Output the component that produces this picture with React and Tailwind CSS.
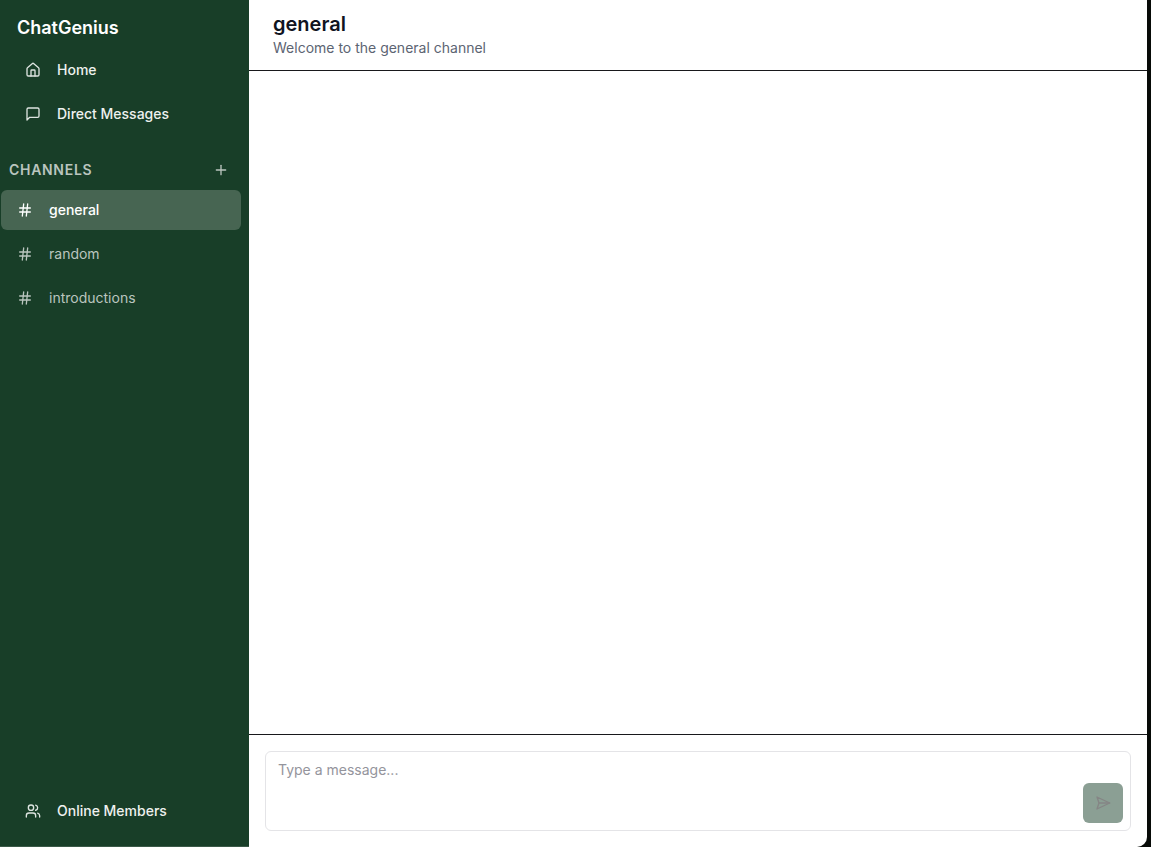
import { Hash, House, Plus, Users } from "lucide-react";

const channels = ["general", "random", "introductions"];

function MessageIcon({ className }) {
  return (
    <svg
      viewBox="0 0 24 24"
      className={`size-4 ${className}`}
      fill="none"
      stroke="currentColor"
      strokeWidth="2"
      strokeLinecap="round"
      strokeLinejoin="round"
      aria-hidden="true"
    >
      <path d="M21 15a2 2 0 0 1-2 2H7l-4 4V5a2 2 0 0 1 2-2h14a2 2 0 0 1 2 2z" />
    </svg>
  );
}

function SendIcon() {
  return (
    <svg
      viewBox="0 0 24 24"
      className="size-4"
      fill="none"
      stroke="currentColor"
      strokeWidth="2"
      strokeLinecap="round"
      strokeLinejoin="round"
      aria-hidden="true"
    >
      <path d="m3 3 3 9-3 9 19-9Z" />
      <path d="M6 12h16" />
    </svg>
  );
}

function NavButton({ icon: Icon, children }) {
  return (
    <button
      type="button"
      className="flex h-10 w-full items-center gap-4 rounded-md px-4 text-left text-sm font-medium text-[#eef1ef]"
    >
      <Icon size={16} className="shrink-0 text-[#dde4e0]" />
      {children}
    </button>
  );
}

function ChannelButton({ name, active }) {
  return (
    <button
      type="button"
      aria-current={active ? "page" : undefined}
      className={
        active
          ? "flex h-10 w-full items-center gap-4 rounded-md bg-[#476552] px-4 text-left text-sm font-medium text-white"
          : "flex h-10 w-full items-center gap-4 rounded-md px-4 text-left text-sm text-[#bac5bf]"
      }
    >
      <Hash size={16} strokeWidth={2} className="shrink-0" />
      {name}
    </button>
  );
}

function Sidebar() {
  return (
    <aside className="flex w-[249px] shrink-0 flex-col bg-[#183e28] pr-2 pl-px shadow-[inset_0_-1px_0_#3b5948]">
      <h1 className="px-4 pt-3.5 text-lg leading-7 font-semibold text-white">ChatGenius</h1>
      <nav aria-label="Main" className="mt-2 flex flex-col gap-1 pl-2">
        <NavButton icon={House}>Home</NavButton>
        <NavButton icon={MessageIcon}>Direct Messages</NavButton>
      </nav>
      <section className="mt-6">
        <div className="flex h-6 items-center justify-between pr-3 pl-2 text-[#bac5bf]">
          <h2 className="text-sm font-semibold tracking-wider uppercase">Channels</h2>
          <button type="button" aria-label="Add channel" className="flex size-4 items-center justify-center">
            <Plus size={16} strokeWidth={2} />
          </button>
        </div>
        <nav aria-label="Channels" className="mt-2 flex flex-col gap-1">
          {channels.map((name) => (
            <ChannelButton key={name} name={name} active={name === "general"} />
          ))}
        </nav>
      </section>
      <div className="mt-auto pb-4 pl-2">
        <NavButton icon={Users}>Online Members</NavButton>
      </div>
    </aside>
  );
}

export default function App() {
  return (
    <div className="h-screen bg-[#080b08] pr-1 font-['Inter',sans-serif]">
      <div className="flex h-full overflow-hidden rounded-br-[10px] bg-white">
        <Sidebar />
        <main className="flex min-w-0 flex-1 flex-col">
          <header className="border-b border-[#18181b] px-6 pt-2.5 pb-3">
            <h2 className="text-xl leading-7 font-semibold text-[#10141f]">general</h2>
            <p className="text-sm text-[#5c6472]">Welcome to the general channel</p>
          </header>
          <div className="flex-1" />
          <form className="border-t border-[#18181b] p-4" onSubmit={(e) => e.preventDefault()}>
            <div className="relative">
              <textarea
                aria-label="Message"
                placeholder="Type a message..."
                className="block h-20 w-full resize-none rounded-md border border-[#e4e4e7] px-3 py-2 pr-14 text-sm text-[#10141f] outline-none placeholder:text-[#94949c]"
              />
              <button
                type="submit"
                aria-label="Send message"
                className="absolute right-2 bottom-2 flex size-10 items-center justify-center rounded-md bg-[#8b9f94] text-[#858585]"
              >
                <SendIcon />
              </button>
            </div>
          </form>
        </main>
      </div>
    </div>
  );
}
